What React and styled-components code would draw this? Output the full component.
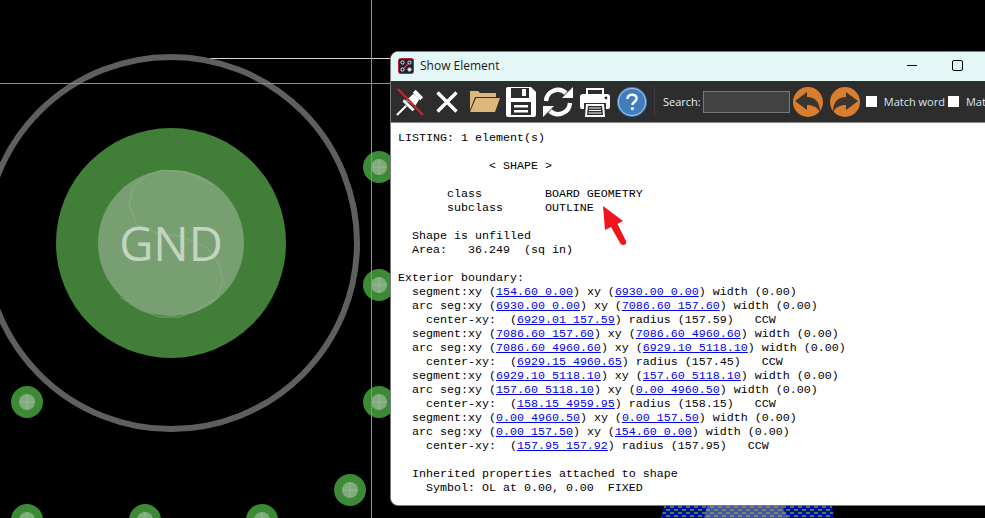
import React from "react";
import styled, { createGlobalStyle } from "styled-components";

const vias = [
  [379, 167],
  [379, 285],
  [379, 402],
  [27, 402],
  [350, 490],
  [27, 520],
  [145, 520],
  [262, 520],
];

// text in [brackets] is a link
const listing = [
  "LISTING: 1 element(s)",
  "",
  "             < SHAPE >",
  "",
  "       class         BOARD GEOMETRY",
  "       subclass      OUTLINE",
  "",
  "  Shape is unfilled",
  "  Area:   36.249  (sq in)",
  "",
  "Exterior boundary:",
  "  segment:xy ([154.60 0.00]) xy ([6930.00 0.00]) width (0.00)",
  "  arc seg:xy ([6930.00 0.00]) xy ([7086.60 157.60]) width (0.00)",
  "    center-xy:  ([6929.01 157.59]) radius (157.59)   CCW",
  "  segment:xy ([7086.60 157.60]) xy ([7086.60 4960.60]) width (0.00)",
  "  arc seg:xy ([7086.60 4960.60]) xy ([6929.10 5118.10]) width (0.00)",
  "    center-xy:  ([6929.15 4960.65]) radius (157.45)   CCW",
  "  segment:xy ([6929.10 5118.10]) xy ([157.60 5118.10]) width (0.00)",
  "  arc seg:xy ([157.60 5118.10]) xy ([0.00 4960.50]) width (0.00)",
  "    center-xy:  ([158.15 4959.95]) radius (158.15)   CCW",
  "  segment:xy ([0.00 4960.50]) xy ([0.00 157.50]) width (0.00)",
  "  arc seg:xy ([0.00 157.50]) xy ([154.60 0.00]) width (0.00)",
  "    center-xy:  ([157.95 157.92]) radius (157.95)   CCW",
  "",
  "  Inherited properties attached to shape",
  "    Symbol: OL at 0.00, 0.00  FIXED",
];

function ListingLine({ text }) {
  const parts = text.split(/\[|\]/);
  return (
    <Line>
      {parts.map((part, i) =>
        i % 2 ? <Link key={i}>{part}</Link> : <span key={i}>{part}</span>
      )}
    </Line>
  );
}

function Board() {
  return (
    <BoardSvg viewBox="0 0 985 518">
      <defs>
        <pattern id="hatch" width="8" height="6" patternUnits="userSpaceOnUse" x="662" y="506">
          <rect width="8" height="6" fill="#0808a8" />
          <rect x="0" y="0" width="4" height="2" fill="#2f8a3c" />
          <rect x="4" y="3" width="4" height="2" fill="#2f8a3c" />
        </pattern>
      </defs>
      <path d="M171 58.5H392" stroke="#d8d8d8" strokeWidth="1" />
      <circle cx="171" cy="243" r="186" fill="none" stroke="#5f5f5f" strokeWidth="6" />
      <circle cx="171" cy="243" r="115" fill="#417f38" />
      <circle cx="171" cy="243" r="73" fill="#789f72" />
      <path
        d="M162 170L147 175L133 188L129 206L137 225L157 233L183 237L207 248L218 262L223 280L217 298L197 310L180 317L160 317L140 310L120 297"
        fill="none"
        stroke="#8fb38a"
        strokeWidth="0.7"
      />
      <path d="M162 170L187 172L213 185" fill="none" stroke="#8fb38a" strokeWidth="0.7" />
      <GndLabel x="171" y="261" textAnchor="middle">
        GND
      </GndLabel>
      {vias.map(([x, y]) => (
        <g key={`${x}-${y}`}>
          <circle cx={x} cy={y} r="16" fill="#3c8a35" />
          <circle cx={x} cy={y} r="8" fill="#82ab7c" />
          <path d={`M${x - 8} ${y}H${x + 8}M${x} ${y - 8}V${y + 8}`} stroke="#93bb8d" strokeWidth="1" />
        </g>
      ))}
      <path d="M371.5 0V518" stroke="#8e8e8e" strokeWidth="1" />
      <path d="M0 83.5H392" stroke="#8e8e8e" strokeWidth="1" />
      <path d="M664 506H832L834 518H661Z" fill="url(#hatch)" />
      <path d="M707 506H782L788 518H704Z" fill="#9a9a9a" opacity="0.5" />
    </BoardSvg>
  );
}

function AppLogo() {
  return (
    <svg width="16" height="16" viewBox="0 0 16 16">
      <rect x="0.5" y="0.5" width="15" height="15" rx="2" fill="#1d2230" stroke="#c8203a" />
      <path d="M3 13L13 3" stroke="#d8263f" strokeWidth="1.6" />
      <circle cx="4.5" cy="4.5" r="1.6" fill="#1d2230" stroke="#e6e6e6" />
      <circle cx="11.5" cy="4.5" r="1.6" fill="#1d2230" stroke="#e6e6e6" />
      <circle cx="4.5" cy="11.5" r="1.6" fill="#1d2230" stroke="#e6e6e6" />
      <circle cx="11.5" cy="11.5" r="1.6" fill="#e6e6e6" stroke="#e6e6e6" />
    </svg>
  );
}

function PinIcon() {
  return (
    <svg width="30" height="30" viewBox="0 0 30 30">
      <path d="M21 2L29 10L26 13L18 5Z" fill="#fff" />
      <path d="M19 6L25 12L20 20L11 13Z" fill="#fff" />
      <path d="M9 12L20 23L17.5 25L7 14.5Z" fill="#fff" />
      <path d="M11 19L1 29" stroke="#fff" strokeWidth="2.2" />
      <path d="M2 1L29 29" stroke="#d0202c" strokeWidth="2.4" />
    </svg>
  );
}

function CloseIcon() {
  return (
    <svg width="22" height="22" viewBox="0 0 22 22">
      <path d="M1.5 1.5L20.5 20.5M20.5 1.5L1.5 20.5" stroke="#fff" strokeWidth="3.4" />
    </svg>
  );
}

function FolderIcon() {
  return (
    <svg width="31" height="24" viewBox="0 0 31 24">
      <path d="M1 4V1H9L11 3H27V7H6L1 20Z" fill="#dcb67c" />
      <path d="M7 8H31L26 22H1Z" fill="#dcb67c" />
    </svg>
  );
}

function SaveIcon() {
  return (
    <svg width="30" height="30" viewBox="0 0 30 30">
      <path d="M2 0H25L30 5V28Q30 30 28 30H2Q0 30 0 28V2Q0 0 2 0Z" fill="#fff" />
      <rect x="5" y="1" width="18" height="10" fill="#2d2d2d" />
      <rect x="16" y="2" width="4" height="7" fill="#fff" />
      <rect x="5" y="15" width="20" height="13" fill="#2d2d2d" />
      <rect x="8" y="18" width="14" height="2.5" fill="#fff" />
      <rect x="8" y="23" width="14" height="2.5" fill="#fff" />
    </svg>
  );
}

function RefreshIcon() {
  return (
    <svg width="30" height="30" viewBox="0 0 30 30">
      <path d="M3 14A12 12 0 0 1 23 6" fill="none" stroke="#fff" strokeWidth="4.4" />
      <path d="M19 11H30V0Z" fill="#fff" />
      <path d="M27 16A12 12 0 0 1 7 24" fill="none" stroke="#fff" strokeWidth="4.4" />
      <path d="M11 19H0V30Z" fill="#fff" />
    </svg>
  );
}

function PrinterIcon() {
  return (
    <svg width="30" height="30" viewBox="0 0 30 30">
      <path d="M6 8V1H24V8H22V3H8V8Z" fill="#fff" />
      <path d="M3 7H27Q30 7 30 10V20Q30 22 28 22H26V16H4V22H2Q0 22 0 20V10Q0 7 3 7Z" fill="#fff" />
      <circle cx="26" cy="11" r="1.4" fill="#2d2d2d" />
      <path d="M6 17H24L25 30H5Z" fill="#fff" />
      <path d="M8 19H22L23 28H7Z" fill="#2d2d2d" />
      <path d="M9 21H21M9 23.5H21M8.5 26H21.5" stroke="#fff" strokeWidth="1.2" />
    </svg>
  );
}

function HelpIcon() {
  return (
    <svg width="30" height="30" viewBox="0 0 30 30">
      <circle cx="15" cy="15" r="15" fill="#3f7dbd" />
      <circle cx="15" cy="15" r="13.6" fill="none" stroke="#cfe0f2" strokeWidth="0.8" />
      <path
        d="M10.5 12C10.5 9 12.6 7.8 15 7.8C17.6 7.8 19.6 9.2 19.6 11.6C19.6 14.6 15.4 14.8 15.4 18"
        fill="none"
        stroke="#fff"
        strokeWidth="2.4"
      />
      <circle cx="15.4" cy="21.6" r="1.6" fill="#fff" />
    </svg>
  );
}

function ArrowIcon({ flip }) {
  return (
    <svg width="30" height="30" viewBox="0 0 30 30" style={flip ? { transform: "scaleX(-1)" } : undefined}>
      <circle cx="15" cy="15" r="15" fill="#d97e2e" />
      <path d="M2 14L14 5V10C22 10 27 15 27 25C24 20 20 18 14 18V23Z" fill="#3a3530" />
    </svg>
  );
}

export default function App() {
  return (
    <>
      <GlobalStyle />
      <Canvas>
        <Board />
        <Win>
          <TitleBar>
            <TitleLeft>
              <AppLogo />
              <Title>Show Element</Title>
            </TitleLeft>
            <WinButtons>
              <Minimize />
              <Maximize />
            </WinButtons>
          </TitleBar>
          <Toolbar>
            <Tool $width={28}><PinIcon /></Tool>
            <Tool $width={22} $margin={12}><CloseIcon /></Tool>
            <Tool $width={31} $margin={11}><FolderIcon /></Tool>
            <Tool $width={30} $margin={6}><SaveIcon /></Tool>
            <Tool $width={30} $margin={7}><RefreshIcon /></Tool>
            <Tool $width={30} $margin={7}><PrinterIcon /></Tool>
            <Tool $width={30} $margin={7}><HelpIcon /></Tool>
            <Separator />
            <SearchLabel>Search:</SearchLabel>
            <SearchBox />
            <Tool $width={30} $margin={3}><ArrowIcon /></Tool>
            <Tool $width={30} $margin={7}><ArrowIcon flip /></Tool>
            <Check $margin={6} />
            <CheckLabel>Match word</CheckLabel>
            <Check $margin={3} />
            <CheckLabel>Match case</CheckLabel>
          </Toolbar>
          <Listing>
            {listing.map((text, i) => (
              <ListingLine key={i} text={text} />
            ))}
          </Listing>
          <Callout viewBox="0 0 30 44">
            <path d="M4 2L24 17L18.5 20L27 37Q28 41 24 41Q22 41 21 39L12 23L6 26Z" fill="#f0141e" />
          </Callout>
        </Win>
      </Canvas>
    </>
  );
}

const GlobalStyle = createGlobalStyle`
  html, body {
    margin: 0;
    padding: 0;
    background: #000;
    overflow: hidden;
  }
`;
const Canvas = styled.div`
  position: relative;
  width: 985px;
  height: 518px;
  overflow: hidden;
  background: #000;
`;
const BoardSvg = styled.svg`
  display: block;
  width: 985px;
  height: 518px;
`;
const GndLabel = styled.text`
  font-family: "Open Sans", "Noto Sans", sans-serif;
  font-size: 47px;
  fill: #c3d5c0;
`;
const Win = styled.div`
  position: absolute;
  left: 390px;
  top: 51px;
  width: 640px;
  height: 455px;
  display: flex;
  flex-direction: column;
  background: #fff;
  border: 1px solid #7c7c7c;
  border-radius: 8px 8px 0 8px;
  box-sizing: border-box;
  overflow: hidden;
`;
const TitleBar = styled.div`
  flex: none;
  height: 29px;
  box-sizing: border-box;
  display: flex;
  align-items: center;
  justify-content: space-between;
  background: #e3f7f6;
  padding: 0 0 2px 7px;
`;
const TitleLeft = styled.div`
  display: flex;
  align-items: center;
  gap: 6px;
`;
const Title = styled.span`
  font-family: "Open Sans", sans-serif;
  font-size: 12px;
  color: #1a1a1a;
`;
const WinButtons = styled.div`
  display: flex;
  align-items: center;
  gap: 35px;
  margin-right: 66px;
`;
const Minimize = styled.span`
  width: 10px;
  height: 1px;
  background: #000;
`;
const Maximize = styled.span`
  width: 9px;
  height: 9px;
  border: 1px solid #000;
  border-radius: 2px;
`;
const Toolbar = styled.div`
  flex: none;
  height: 41px;
  display: flex;
  align-items: center;
  background: #2d2d2d;
  border-bottom: 1px solid #8c8c8c;
  padding-left: 5px;
  white-space: nowrap;
`;
const Tool = styled.span`
  flex: none;
  width: ${(p) => p.$width}px;
  margin-left: ${(p) => p.$margin || 0}px;
  display: flex;
  align-items: center;
  justify-content: center;
  svg {
    display: block;
  }
`;
const Separator = styled.span`
  flex: none;
  width: 1px;
  height: 30px;
  margin: 0 8px 0 7px;
  background: #3c3c3c;
`;
const SearchLabel = styled.span`
  font-family: "Open Sans", sans-serif;
  font-size: 11px;
  color: #e6f0ff;
`;
const SearchBox = styled.span`
  flex: none;
  width: 85px;
  height: 20px;
  margin-left: 2px;
  background: #424242;
  border: 1px solid #777;
`;
const Check = styled.span`
  flex: none;
  width: 11px;
  height: 11px;
  margin-left: ${(p) => p.$margin}px;
  background: #fff;
`;
const CheckLabel = styled.span`
  margin-left: 7px;
  font-family: "Open Sans", sans-serif;
  font-size: 11px;
  color: #d6e6fa;
`;
const Listing = styled.div`
  padding: 8px 0 0 7px;
  font-family: "Liberation Mono", monospace;
  font-size: 11.67px;
  line-height: 14px;
  color: #000;
`;
const Line = styled.div`
  height: 14px;
  white-space: pre;
`;
const Link = styled.a`
  color: #0000e6;
  text-decoration: underline;
`;
const Callout = styled.svg`
  position: absolute;
  left: 208px;
  top: 152px;
  width: 30px;
  height: 44px;
`;
